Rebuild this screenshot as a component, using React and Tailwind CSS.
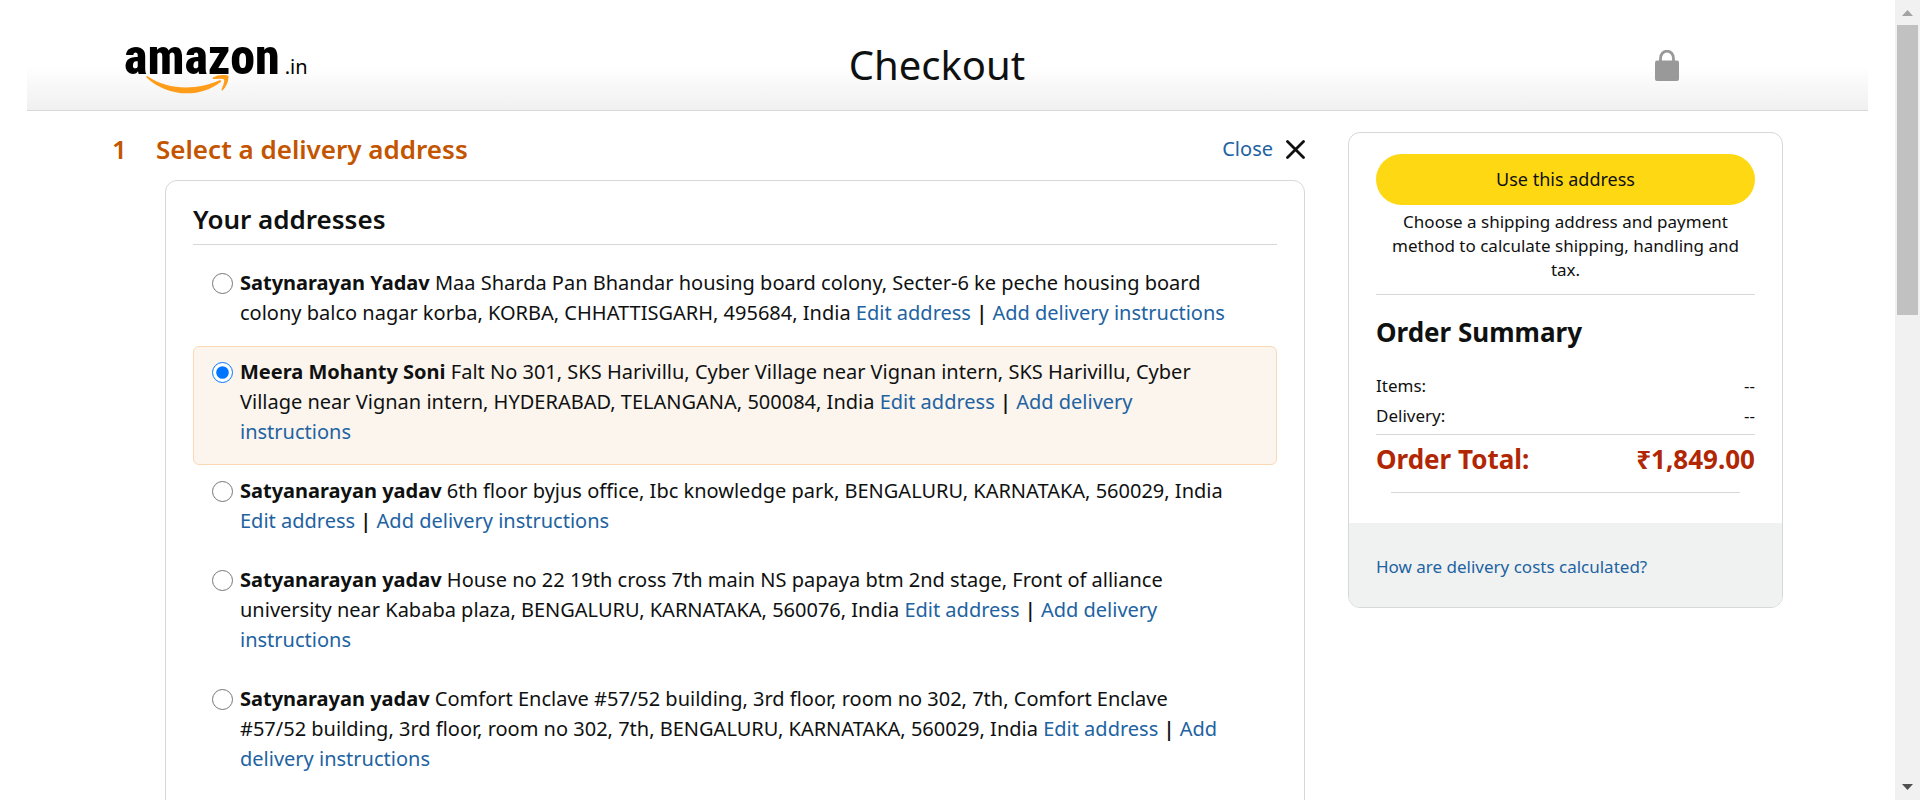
import React from "react";

const ADDRESSES = [
  {
    id: "korba",
    name: "Satynarayan Yadav",
    text: "Maa Sharda Pan Bhandar housing board colony, Secter-6 ke peche housing board colony balco nagar korba, KORBA, CHHATTISGARH, 495684, India",
  },
  {
    id: "hyderabad",
    name: "Meera Mohanty Soni",
    text: "Falt No 301, SKS Harivillu, Cyber Village near Vignan intern, SKS Harivillu, Cyber Village near Vignan intern, HYDERABAD, TELANGANA, 500084, India",
  },
  {
    id: "byjus",
    name: "Satyanarayan yadav",
    text: "6th floor byjus office, Ibc knowledge park, BENGALURU, KARNATAKA, 560029, India",
  },
  {
    id: "btm",
    name: "Satyanarayan yadav",
    text: "House no 22 19th cross 7th main NS papaya btm 2nd stage, Front of alliance university near Kababa plaza, BENGALURU, KARNATAKA, 560076, India",
  },
  {
    id: "comfort",
    name: "Satynarayan yadav",
    text: "Comfort Enclave #57/52 building, 3rd floor, room no 302, 7th, Comfort Enclave #57/52 building, 3rd floor, room no 302, 7th, BENGALURU, KARNATAKA, 560029, India",
  },
];

function Logo() {
  return (
    <a href="#home" aria-label="amazon.in" className="relative flex items-baseline gap-[5px] pt-1 text-black">
      <span className="font-['Roboto_Condensed','Open_Sans_Condensed','Noto_Sans_Condensed',Roboto,sans-serif] text-[50px] leading-[60px] font-extrabold">
        amazon
      </span>
      <span className="text-[20px] leading-6">.in</span>
      <svg className="absolute left-[22px] top-[51px] h-[21px] w-[84px]" viewBox="0 0 84 21" aria-hidden="true">
        <path
          fill="#ff9d1a"
          d="M.3 2.600C.7 1.900 1.400 2 2.400 2.700 13 9.800 26 13.400 40 13.400 51 13.400 62 11.200 73.500 6.300 75 5.700 75.900 7.200 74.500 8.200 65 15.600 53 19.300 41 19.300 25.500 19.300 11.500 13.500 1 3.900.4 3.400.1 3 .3 2.600Z"
        />
        <path
          fill="#ff9d1a"
          d="M67 3.600C70.800 1 76 .6 81 1.300c1.200.2 1.700.8 1.500 2.500-.3 4.700-2.600 9.200-5.500 12.200-1 .9-1.800.5-1.400-.5 1.200-3 3.400-8.600 2.400-10-1-1.300-6.700-.7-9.900-.4-1.400.1-1.900-.6-1.100-1.500Z"
        />
      </svg>
    </a>
  );
}

function Header() {
  return (
    <header className="mx-[27px] grid h-[111px] grid-cols-[1fr_auto_1fr] items-center border-b border-[#d8d8d8] bg-linear-to-b from-white from-60% to-[#f0f0f0] pr-[118px] pl-[97px]">
      <div className="flex">
        <Logo />
      </div>
      <h1 className="pt-5 text-center text-[40px] leading-[52px]">Checkout</h1>
      <svg className="mt-5 mr-[71px] h-[31px] w-6 justify-self-end" viewBox="0 0 24 31" role="img" aria-label="Secure checkout">
        <path d="M5.500 12V8.500C5.500 4.300 8.300 1.200 12 1.200S18.500 4.300 18.500 8.500V12" fill="none" stroke="#999" strokeWidth="2.800" />
        <rect y="10.500" width="24" height="20.500" rx="2" fill="#999" />
      </svg>
    </header>
  );
}

function AddressRow({ address, selected }) {
  return (
    <li
      className={
        selected
          ? "flex gap-[7px] rounded-md border border-[#fbd8b4] bg-[#fcf5ee] px-[18px] pt-[10px] pb-[17px]"
          : "flex gap-[7px] border border-transparent px-[18px] pt-[10px] pb-[17px]"
      }
    >
      <input
        type="radio"
        name="address"
        id={address.id}
        defaultChecked={selected}
        className="mt-[5px] h-[21px] w-[21px] shrink-0 accent-[#0075ff]"
      />
      <div className="pr-[26px]">
        <label htmlFor={address.id}>
          <b>{address.name}</b> {address.text}
        </label>{" "}
        <a href="#edit" className="text-[#2162a1]">Edit address</a> <span className="font-semibold">|</span>{" "}
        <a href="#instructions" className="text-[#2162a1]">Add delivery instructions</a>
      </div>
    </li>
  );
}

function Scrollbar() {
  return (
    <div className="flex w-[25px] shrink-0 flex-col items-center bg-[#f1f1f1]" aria-hidden="true">
      <svg className="h-[25px] w-[25px] shrink-0" viewBox="0 0 25 25">
        <path d="M7 16h11l-5.500-6z" fill="#a3a3a3" />
      </svg>
      <div className="h-[290px] w-[21px] bg-[#c1c1c1]" />
      <svg className="mt-auto h-[25px] w-[25px] shrink-0" viewBox="0 0 25 25">
        <path d="M7 9h11l-5.500 6z" fill="#505050" />
      </svg>
    </div>
  );
}

export default function App() {
  return (
    <div className="flex h-screen overflow-hidden bg-white font-['Noto_Sans',sans-serif] text-[#0f1111]">
      <div className="min-w-0 flex-1">
        <Header />
        <main className="flex items-start gap-[43px] pr-[112px] pl-[112px]">
          <section className="min-w-0 flex-1">
            <div className="flex items-center pt-5 pb-[13px]">
              <span className="w-11 text-[26px] leading-9 font-semibold text-[#c45500]">1</span>
              <h2 className="flex-1 text-[26px] leading-9 font-semibold text-[#c45500]">Select a delivery address</h2>
              <button type="button" className="flex items-center gap-[13px] text-[20px] leading-[30px] text-[#2162a1]">
                Close
                <svg className="h-[19px] w-[19px]" viewBox="0 0 19 19" aria-hidden="true">
                  <path d="M1.500 1.500l16 16M17.500 1.500l-16 16" stroke="#0f1111" strokeWidth="2.800" strokeLinecap="round" />
                </svg>
              </button>
            </div>
            <div className="ml-[53px] rounded-xl border border-[#d5d9d9] px-[27px] pt-[20px] pb-7">
              <h3 className="border-b border-[#d5d9d9] pb-[7px] text-[26px] leading-9 font-semibold">Your addresses</h3>
              <ul className="pt-3 text-[20px] leading-[30px]">
                {ADDRESSES.map((a) => (
                  <AddressRow key={a.id} address={a} selected={a.id === "hyderabad"} />
                ))}
              </ul>
            </div>
          </section>
          <aside className="mt-[21px] w-[435px] shrink-0 overflow-hidden rounded-xl border border-[#d5d9d9]">
            <div className="px-[27px] pt-[21px] pb-[30px]">
              <button type="button" className="h-[51px] w-full rounded-full bg-[#ffd814] text-[18px]">
                Use this address
              </button>
              <p className="border-b border-[#d5d9d9] pt-[5px] pb-3 text-center text-[17px] leading-6">
                Choose a shipping address and payment method to calculate shipping, handling and tax.
              </p>
              <h2 className="pt-[19px] pb-[21px] text-[26px] leading-9 font-bold">Order Summary</h2>
              <dl className="border-b border-[#d5d9d9] pb-[3px] text-[17px] leading-[30px]">
                <div className="flex justify-between"><dt>Items:</dt><dd>--</dd></div>
                <div className="flex justify-between"><dt>Delivery:</dt><dd>--</dd></div>
              </dl>
              <p className="flex justify-between pt-[6px] pb-[15px] text-[26px] leading-9 font-bold text-[#b12704]">
                <span>Order Total:</span>
                <span>₹1,849.00</span>
              </p>
              <hr className="mx-[15px] border-[#d5d9d9]" />
            </div>
            <div className="bg-[#f0f2f2] px-[27px] pt-8 pb-7 text-[17px] leading-6">
              <a href="#costs" className="text-[#2162a1]">How are delivery costs calculated?</a>
            </div>
          </aside>
        </main>
      </div>
      <Scrollbar />
    </div>
  );
}
